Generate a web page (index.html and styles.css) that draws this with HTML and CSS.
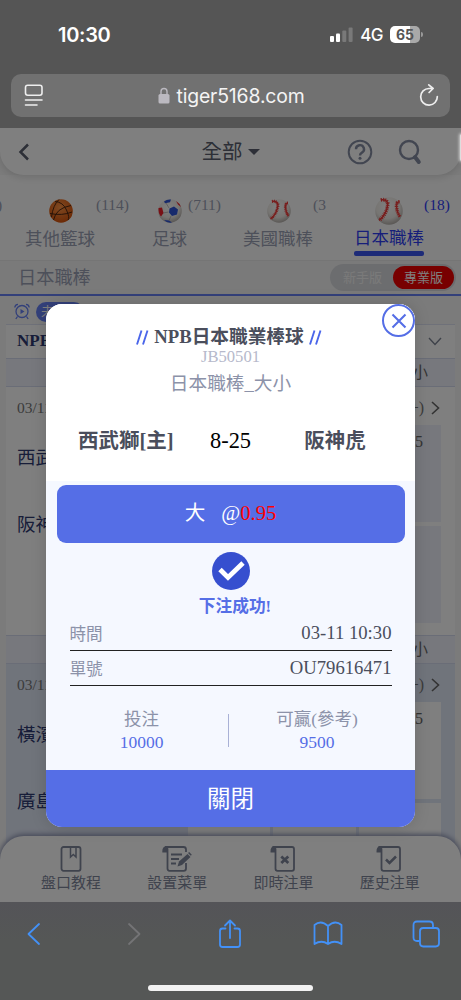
FILE: index.html
```html
<!doctype html>
<html lang="zh-Hant">
    <head>
        <meta charset="utf-8">
        <title>tiger5168.com</title>
        <link rel="stylesheet" href="styles.css">
    </head>
    <body>
        <!-- shared shapes -->
        <svg class="defs" width="0" height="0">
            <radialGradient id="shade" cx="45%" cy="35%" r="65%">
                <stop offset="0" stop-color="#fff"/>
                <stop offset=".65" stop-color="#eeebe6"/>
                <stop offset="1" stop-color="#b5b0ab"/>
            </radialGradient>
            <radialGradient id="orange" cx="45%" cy="35%" r="65%">
                <stop offset="0" stop-color="#ff9344"/>
                <stop offset="1" stop-color="#d8540c"/>
            </radialGradient>
            <symbol id="baseball" viewBox="0 0 24 24">
                <circle cx="12" cy="12" r="11.8" fill="url(#shade)"/>
                <path d="M5 2.500q5-1 6 3.500Q10 15 3.500 20" fill="none" stroke="#f03a38" stroke-width="1.400"/>
                <path d="M5 2.500q5-1 6 3.500Q10 15 3.500 20" fill="none" stroke="#f03a38" stroke-width="3.200" stroke-dasharray=".8 .9"/>
                <path d="M21 4q-3 0-2.500 5t3 8" fill="none" stroke="#f03a38" stroke-width="1.300"/>
                <path d="M21 4q-3 0-2.500 5t3 8" fill="none" stroke="#f03a38" stroke-width="3" stroke-dasharray=".8 .9"/>
            </symbol>
        </svg>

        <div class="status-bar">
            <span class="clock">10:30</span>
            <div class="signals">
                <svg width="24" height="16" viewBox="0 0 24 16">
                    <rect x="1" y="9" width="4" height="6" rx="1" fill="#fff"/>
                    <rect x="7" y="6.500" width="4" height="8.500" rx="1" fill="#fff"/>
                    <rect x="13.300" y="3.500" width="4" height="11.500" rx="1" fill="#797979"/>
                    <rect x="19.600" y="0.500" width="4" height="14.500" rx="1" fill="#797979"/>
                </svg>
                <span class="network">4G</span>
                <span class="battery">65</span>
                <span class="battery-tip"></span>
            </div>
        </div>

        <div class="address-row">
            <div class="address-bar">
                <svg width="20" height="23" viewBox="0 0 20 23" fill="none" stroke="#eee" stroke-width="1.600" stroke-linecap="round">
                    <rect x="1.500" y="1.300" width="16.500" height="10" rx="2.200"/>
                    <path d="M1.500 16h16.500M1.500 21h11.500"/>
                </svg>
                <div class="url">
                    <svg width="12" height="17" viewBox="0 0 12 17">
                        <path d="M3 8V4.500a3 3 0 0 1 6 0V8" fill="none" stroke="#bbb9c0" stroke-width="1.400"/>
                        <rect x=".5" y="7" width="11" height="9.500" rx="1.600" fill="#bbb9c0"/>
                    </svg>
                    <span>tiger5168.com</span>
                </div>
                <svg width="20" height="23" viewBox="0 0 20 23" fill="none" stroke="#eee" stroke-width="1.700" stroke-linecap="round" stroke-linejoin="round">
                    <path d="M18.300 12.500a8.300 8.300 0 1 1-8.300-8h4M9.800 .9l4.300 3.600-4 4"/>
                </svg>
            </div>
        </div>

        <div class="page">
            <div class="top-bar">
                <svg class="back" width="12" height="18" viewBox="0 0 12 18" fill="none" stroke="#5a5f6e" stroke-width="2.500">
                    <path d="M10 1.500L2.500 9l7.500 7.500"/>
                </svg>
                <div class="select">全部<span class="caret"></span></div>
                <div class="tools">
                    <svg width="26" height="26" viewBox="0 0 26 26" fill="none" stroke="#858da2" stroke-width="2">
                        <circle cx="13" cy="13" r="11.300"/>
                        <path d="M9 10.300a4 4 0 1 1 6 3.300c-1.400.9-2 1.500-2 2.900" stroke-width="2.400"/>
                        <circle cx="13" cy="19.300" r="1.500" fill="#858da2" stroke="none"/>
                    </svg>
                    <svg width="24" height="26" viewBox="0 0 24 26" fill="none" stroke="#858da2">
                        <circle cx="11" cy="11" r="9" stroke-width="2.400"/>
                        <path d="M17 18l3.800 5" stroke-width="4" stroke-linecap="round"/>
                    </svg>
                </div>
                <span class="edge-glow"></span>
            </div>

            <div class="tabs">
                <div class="tab cut">
                    <span class="count">)</span>
                </div>
                <div class="tab basketball">
                    <svg class="ball" width="24" height="24" viewBox="0 0 24 24">
                        <circle cx="12" cy="12" r="11.800" fill="url(#orange)"/>
                        <path d="M6 2.500Q14 3 17.500 11T19 21M1 14.500q12 2.500 22-1.500M10 .5Q4 6 2.500 18M22 6.500Q7 9 4.500 21" fill="none" stroke="#42200e" stroke-width=".9"/>
                    </svg>
                    <span class="count">(114)</span>
                    <span class="name">其他籃球</span>
                </div>
                <div class="tab football">
                    <svg class="ball" width="24" height="24" viewBox="0 0 24 24">
                        <circle cx="12" cy="12" r="11.800" fill="url(#shade)"/>
                        <path d="M11.500 9.500l4.500-2 4 3-1 5-5 1.500-3-3.500zM6 2.500Q9 0 13 .5l-1 2.700-5 1zM6 21l5 .5 3 2q-5 .8-8-2.500z" fill="#2f55d8"/>
                        <path d="M.5 9l3.500-.5L5.500 14 3 17.500Q0 14 .5 9zM18 2q4 2.500 5 6l-3-2.500z" fill="#f0202a"/>
                        <path d="M5 14l5.500-1M13 17l-2 4.500M11 9L8 4" fill="none" stroke="#999" stroke-width=".6"/>
                    </svg>
                    <span class="count">(711)</span>
                    <span class="name">足球</span>
                </div>
                <div class="tab mlb">
                    <svg class="ball" width="24" height="24"><use href="#baseball"/></svg>
                    <span class="count">(3</span>
                    <span class="name">美國職棒</span>
                </div>
                <div class="tab npb active">
                    <svg class="ball" width="28" height="28"><use href="#baseball"/></svg>
                    <span class="count">(18)</span>
                    <span class="name">日本職棒</span>
                </div>
            </div>

            <div class="section-bar">
                <span>日本職棒</span>
                <div class="mode">
                    <span class="mode-item">新手版</span>
                    <span class="mode-item on">專業版</span>
                </div>
            </div>

            <div class="filter-row">
                <svg width="16" height="17" viewBox="0 0 16 17" fill="none" stroke="#6680f5" stroke-width="1.300">
                    <circle cx="8" cy="8.500" r="6"/>
                    <path d="M.8 4.500Q1 1.500 4 1.300M15.200 4.500Q15 1.500 12 1.300M3.500 13.500L1.800 16M12.500 13.500l1.700 2.500"/>
                    <path d="M6.500 6v5l4-2.500z" fill="#6680f5" stroke="none"/>
                </svg>
                <span class="pill">未開賽</span>
            </div>

            <div class="league">
                <div class="league-head">
                    <span>NPB</span>
                    <svg width="14" height="9" viewBox="0 0 14 9" fill="none" stroke="#7d8494" stroke-width="1.400"><path d="M1 1l6 6.500L13 1"/></svg>
                </div>
                <div class="columns">大小</div>
                <div class="match">
                    <div class="match-info">
                        <span>03/11</span>
                        <span class="more">(+)<svg width="9" height="14" viewBox="0 0 9 14" fill="none" stroke="#666" stroke-width="1.600"><path d="M1 1l6.500 6L1 13"/></svg></span>
                    </div>
                    <div class="match-body">
                        <div class="teams"><span>西武獅</span><span>阪神虎</span></div>
                        <div class="odds">
                            <span class="odd"></span><span class="odd"></span><span class="odd">8.5</span>
                            <span class="odd"></span><span class="odd"></span><span class="odd"></span>
                        </div>
                    </div>
                </div>
                <div class="columns">大小</div>
                <div class="match tinted">
                    <div class="match-info">
                        <span>03/11</span>
                        <span class="more">(+)<svg width="9" height="14" viewBox="0 0 9 14" fill="none" stroke="#666" stroke-width="1.600"><path d="M1 1l6.500 6L1 13"/></svg></span>
                    </div>
                    <div class="match-body">
                        <div class="teams"><span>橫濱</span><span>廣島</span></div>
                        <div class="odds">
                            <span class="odd"></span><span class="odd"></span><span class="odd">8.5</span>
                            <span class="odd"></span><span class="odd"></span><span class="odd"></span>
                        </div>
                    </div>
                </div>
            </div>

            <div class="bottom-nav">
                <div class="nav-item">
                    <svg width="30" height="26" viewBox="0 0 30 26" fill="none" stroke="#7f869b" stroke-width="1.800">
                        <rect x="5.500" y="1" width="19" height="23.800" rx="2"/>
                        <path d="M14.500 1v10l2.800-2.500L20 11V1" stroke-width="1.500"/>
                    </svg>
                    <span>盤口教程</span>
                </div>
                <div class="nav-item">
                    <svg width="30" height="26" viewBox="0 0 30 26" fill="none" stroke="#7f869b" stroke-width="1.800">
                        <path d="M24 17v5.500q0 2.300-2.300 2.300H7.500q-2 0-2-2.300V3.500Q5.500 1 3 1h18.500Q24 1 24 3.500V6"/>
                        <path d="M5 1.200Q1 .8 1.200 5.500H5z" fill="#7f869b"/>
                        <path d="M9 8.500h11M9 13h8M9 17.500h5"/>
                        <path d="M15.500 20.500l1.500-5 8.500-7.500 3 3-8.500 8z" fill="#7f869b" stroke="none"/>
                        <path d="M26 7l1.200-1 2.600 2.700-1 1z" fill="#7f869b" stroke="none"/>
                    </svg>
                    <span>設置菜單</span>
                </div>
                <div class="nav-item">
                    <svg width="30" height="26" viewBox="0 0 30 26" fill="none" stroke="#7f869b" stroke-width="1.800">
                        <path d="M3.500 1h19.500q2 0 2 2v19.800q0 2-2 2H8.500q-2 0-2-2V3.500Q6.500 1 4 1"/>
                        <path d="M6 1.200Q2.200.8 2.400 5.500H6z" fill="#7f869b"/>
                        <path d="M12.300 10.500l7 6.500M19.300 10.500l-7 6.500" stroke-width="2.800"/>
                    </svg>
                    <span>即時注單</span>
                </div>
                <div class="nav-item">
                    <svg width="30" height="26" viewBox="0 0 30 26" fill="none" stroke="#7f869b" stroke-width="1.800">
                        <path d="M3.500 1h19.500q2 0 2 2v19.800q0 2-2 2H8.500q-2 0-2-2V3.500Q6.500 1 4 1"/>
                        <path d="M6 1.200Q2.200.8 2.400 5.500H6z" fill="#7f869b"/>
                        <path d="M11 13.500l3.500 3.500 6.500-6.500" stroke-width="2.500"/>
                    </svg>
                    <span>歷史注單</span>
                </div>
            </div>

            <!-- bet receipt -->
            <div class="overlay">
                <div class="modal">
                    <button class="close">
                        <svg width="16" height="16" viewBox="0 0 16 16" stroke="#556ee6" stroke-width="2.100"><path d="M1.500 1.500l13 13M14.500 1.500l-13 13"/></svg>
                    </button>
                    <div class="modal-head">
                        <h1>
                            <svg width="13" height="15" viewBox="0 0 13 15" stroke="#4b66ea" stroke-width="1.900"><path d="M1 14.500L5.500.5M7 14.500L11.500.5"/></svg>
                            NPB日本職業棒球
                            <svg width="13" height="15" viewBox="0 0 13 15" stroke="#4b66ea" stroke-width="1.900"><path d="M1 14.500L5.500.5M7 14.500L11.500.5"/></svg>
                        </h1>
                        <div class="code">JB50501</div>
                        <div class="kind">日本職棒_大小</div>
                        <div class="versus">
                            <span class="side">西武獅[主]</span>
                            <span class="line">8-25</span>
                            <span class="side">阪神虎</span>
                        </div>
                    </div>
                    <div class="pick"><span>大</span><span>@<b>0.95</b></span></div>
                    <svg class="check" width="38" height="38" viewBox="0 0 38 38">
                        <circle cx="19" cy="19" r="19" fill="#364fcf"/>
                        <path d="M8 17.500l8 8L31 11" fill="none" stroke="#fff" stroke-width="4.800"/>
                    </svg>
                    <div class="success">下注成功!</div>
                    <div class="detail"><span>時間</span><span class="value">03-11 10:30</span></div>
                    <div class="detail"><span>單號</span><span class="value">OU79616471</span></div>
                    <div class="amounts">
                        <div>投注<span class="money">10000</span></div>
                        <div class="divider"></div>
                        <div>可贏(參考)<span class="money">9500</span></div>
                    </div>
                    <button class="done">關閉</button>
                </div>
            </div>
        </div>

        <div class="browser-bar">
            <div class="browser-tools">
                <svg width="28" height="30" viewBox="0 0 28 30"><path d="M19 5L8.500 15 19 25"/></svg>
                <svg class="off" width="28" height="30" viewBox="0 0 28 30"><path d="M11 5l10.500 10L11 25"/></svg>
                <svg width="28" height="30" viewBox="0 0 28 30"><path d="M10.500 9.500H7.500Q5 9.500 5 12v13.500Q5 28 7.500 28h15q2.500 0 2.500-2.500V12q0-2.500-2.500-2.500h-3M15 19V2M10 6.500l5-5 5 5"/></svg>
                <svg width="30" height="30" viewBox="0 0 30 30"><path d="M15 7Q8 .5 1.500 6v19q7-4.500 13.500 0 6.500-4.500 13.500 0V6Q22 .5 15 7zV25"/></svg>
                <svg width="28" height="30" viewBox="0 0 28 30"><path d="M7.500 22H5q-3.500 0-3.500-3.500V6q0-3.500 3.500-3.500h12.500Q21 2.500 21 6v2.500"/><rect x="8" y="9" width="19" height="18.500" rx="3.200"/></svg>
            </div>
            <div class="home-indicator"></div>
        </div>
    </body>
</html>
```
FILE: styles.css
```css
*{
    box-sizing: border-box;
}
body{
    margin: 0;
    width: 461px;
    height: 1000px;
    overflow: hidden;
    display: flex;
    flex-direction: column;
    background: #555;
    font-family: "Liberation Serif", "Noto Sans CJK TC", serif;
}
svg{
    display: block;
    flex: none;
}
.defs{
    position: absolute;
}
button{
    border: none;
    padding: 0;
    font-family: inherit;
}

/* PHONE STATUS */
.status-bar{
    height: 74px;
    flex: none;
    display: flex;
    align-items: center;
    justify-content: space-between;
    padding: 0 38px 5px 58px;
    color: #fff;
    font-family: Inter, sans-serif;
}
.clock{
    font-size: 20px;
    font-weight: 600;
    letter-spacing: -0.3px;
}
.signals{
    display: flex;
    align-items: center;
}
.network{
    font-size: 17px;
    font-weight: 500;
    letter-spacing: -0.5px;
    margin: 0 7px 0 7px;
}
.battery{
    width: 30px;
    height: 17px;
    border-radius: 5px;
    background: linear-gradient(to right, #fff 65%, #a9a9a9 65%);
    color: #555;
    font-size: 14px;
    line-height: 17px;
    font-weight: 700;
    text-align: center;
}
.battery-tip{
    width: 2px;
    height: 5px;
    margin-left: 1px;
    border-radius: 0 2px 2px 0;
    background: #999;
}
.address-row{
    height: 54px;
    flex: none;
    padding: 0 11px;
}
.address-bar{
    height: 43px;
    border-radius: 10px;
    background: #717171;
    display: flex;
    align-items: center;
    justify-content: space-between;
    padding: 0 11px 0 13px;
}
.url{
    display: flex;
    align-items: center;
    gap: 6px;
    color: #f4f4f4;
    font-family: Inter, sans-serif;
    font-size: 19.4px;
    letter-spacing: -0.15px;
}

/* PAGE */
.page{
    height: 774px;
    flex: none;
    position: relative;
    overflow: hidden;
    background: #f7f7f7;
}
.top-bar{
    height: 47px;
    position: relative;
    display: grid;
    grid-template-columns: 1fr auto 1fr;
    align-items: center;
    padding: 0 39px 0 18px;
    background: #fff;
    border-radius: 0 0 24px 24px;
    box-shadow: 0 2px 8px rgba(0,0,0,0.14);
}
.select{
    display: flex;
    align-items: center;
    gap: 5px;
    font-size: 20.5px;
    line-height: 30px;
    color: #5a5f6e;
    margin-left: 21px;
    padding-top: 1px;
}
.caret{
    border: 6px solid transparent;
    border-top-color: #5a5f6e;
    border-bottom: none;
}
.tools{
    display: flex;
    justify-content: flex-end;
    gap: 25px;
}
.edge-glow{
    position: absolute;
    right: -3px;
    top: 6px;
    width: 4px;
    height: 27px;
    border-radius: 3px;
    background: #ddd;
    box-shadow: 0 0 3px 1px #ccc;
    z-index: 5;
}
.tabs{
    height: 86px;
    display: grid;
    grid-template-columns: 5px 116px 117px 92px 1fr;
    padding-top: 20px;
    background: #fdfdfd;
    border-bottom: 1px solid #eaeaea;
}
.tab{
    display: grid;
    grid-template-rows: 29px 30px;
    grid-template-columns: auto 1fr;
    align-items: center;
    align-content: start;
    color: #9ba1b4;
    padding-left: 20px;
}
.tab.cut{
    padding: 0;
}
.tab.cut .count{
    margin-left: -3px;
}
.ball{
    margin-left: 24px;
    margin-top: 3px;
}
.count{
    font-size: 15.5px;
    line-height: 18px;
    align-self: start;
    margin-left: 23px;
    padding-top: 1px;
}
.name{
    grid-column: 1 / 3;
    font-size: 17.5px;
    line-height: 26px;
    white-space: nowrap;
}
.tab.football{
    padding-left: 31px;
}
.football .ball{
    margin-left: 6px;
}
.football .count{
    margin-left: 6px;
}
.tab.mlb{
    padding-left: 5px;
}
.mlb .count{
    margin-left: 22px;
}
.tab.npb{
    padding-left: 24px;
}
.npb .ball{
    margin-left: 21px;
    margin-top: 2px;
}
.npb .count{
    margin-left: 21px;
}
.active{
    color: #2e3df5;
}
.active .name{
    width: 70px;
    height: 32px;
    margin-top: 4px;
}
.active .name::after{
    content: "";
    display: block;
    height: 5px;
    border-radius: 2px;
    background: #3b56f0;
}
.section-bar{
    height: 35px;
    display: flex;
    align-items: center;
    justify-content: space-between;
    padding: 0 5px 0 18px;
    border-bottom: 2px solid #6780f5;
    background: #f4f4f5;
    font-size: 18.2px;
    line-height: 24px;
    color: #9ba1b4;
}
.mode{
    display: flex;
    align-items: center;
    width: 126px;
    height: 27px;
    padding: 0 2px;
    border-radius: 14px;
    background: #d9dbde;
}
.mode-item{
    flex: 1;
    text-align: center;
    font-size: 13px;
    line-height: 23px;
    color: #f5f5f5;
    border-radius: 12px;
}
.mode-item.on{
    background: #f00000;
    color: #fff;
}
.filter-row{
    height: 28px;
    display: flex;
    align-items: center;
    gap: 6px;
    padding: 3px 14px 0;
}
.pill{
    width: 48px;
    height: 20px;
    border-radius: 10px;
    background: #6780f5;
    color: #fff;
    font-size: 13px;
    line-height: 20px;
    padding-left: 5px;
}
.league{
    margin: 0 6px;
    height: 520px;
    overflow: hidden;
    background: #fff;
    border-top: 1px solid #dfe3f2;
}
.league-head{
    height: 33px;
    display: flex;
    align-items: center;
    justify-content: space-between;
    padding: 0 13px 1px 11px;
    font-size: 17px;
    font-weight: bold;
    color: #2f3a72;
}
.columns{
    height: 29px;
    padding-right: 27px;
    background: #eef1fa;
    border-top: 1px solid #d4daef;
    border-bottom: 1px solid #d4daef;
    text-align: right;
    font-size: 15.5px;
    line-height: 27px;
    color: #666;
}
.match{
    height: 248px;
    padding: 0 14px 0 11px;
    background: #fff;
}
.match-info{
    height: 38px;
    display: flex;
    align-items: center;
    justify-content: space-between;
    padding: 3px 1px 0 0;
    font-size: 15.5px;
    color: #777;
}
.more{
    display: flex;
    align-items: center;
    gap: 7px;
    font-size: 16px;
}
.match-body{
    display: flex;
}
.teams{
    width: 171px;
    display: flex;
    flex-direction: column;
    gap: 41px;
    padding-top: 20px;
    font-size: 18.5px;
    line-height: 26px;
    color: #2f3a72;
}
.odds{
    flex: 1;
    display: grid;
    grid-template-columns: repeat(3, 1fr);
    grid-auto-rows: 97px;
    gap: 4px 3px;
}
.odd{
    padding: 5px 18px;
    background: #eef1fa;
    text-align: right;
    font-size: 16px;
    line-height: 24px;
    color: #666;
}
.tinted{
    background: #e1e8f7;
}
.tinted .odd{
    background: #fff;
}
.bottom-nav{
    position: absolute;
    left: 0;
    right: 0;
    bottom: 0;
    height: 66px;
    display: grid;
    grid-template-columns: repeat(4, 1fr);
    padding: 10px 18px 0;
    background: #fff;
    border-radius: 24px 24px 0 0;
    box-shadow: 0 -1px 5px 1px #8f96b4;
}
.nav-item{
    display: flex;
    flex-direction: column;
    align-items: center;
    font-size: 15px;
    line-height: 22px;
    color: #7f869b;
}
/* PAGE END */

/* MODAL */
.overlay{
    position: absolute;
    inset: 0;
    display: flex;
    justify-content: center;
    align-items: flex-start;
    padding-top: 176px;
    background: rgba(0,0,0,0.5);
}
.modal{
    position: relative;
    width: 369px;
    height: 523px;
    display: flex;
    flex-direction: column;
    align-items: center;
    border-radius: 16px;
    overflow: hidden;
    background: #f5f8ff;
    box-shadow: 0 0 16px rgba(0,0,0,0.15);
    color: #8c92a9;
}
.close{
    position: absolute;
    top: 0;
    right: 0;
    width: 33px;
    height: 33px;
    display: flex;
    align-items: center;
    justify-content: center;
    border: 2px solid #556ee6;
    border-radius: 50%;
    background: #fff;
}
.modal-head{
    width: 100%;
    height: 177px;
    padding-top: 20px;
    background: #fff;
    text-align: center;
}
h1{
    display: flex;
    align-items: center;
    justify-content: center;
    gap: 5px;
    margin: 0;
    padding-right: 3px;
    font-size: 18.7px;
    line-height: 26px;
    color: #4a4e5c;
}
.code{
    font-size: 16.6px;
    line-height: 16px;
    margin-top: -1px;
    color: #b6b9cb;
}
.kind{
    font-size: 18.7px;
    line-height: 28px;
    margin-top: 5px;
}
.versus{
    display: grid;
    grid-template-columns: 95px 95px 62px;
    justify-content: start;
    align-items: center;
    column-gap: 18px;
    padding-left: 32px;
    margin-top: 27px;
    line-height: 32px;
    white-space: nowrap;
}
.side{
    font-size: 20.5px;
    font-weight: bold;
    color: #4a4e5c;
}
.line{
    font-size: 22.4px;
    color: #000;
    text-align: left;
    padding-left: 19px;
}
.pick{
    width: 348px;
    height: 58px;
    margin-top: 4px;
    display: flex;
    justify-content: center;
    gap: 16px;
    border-radius: 9px;
    background: #556ee6;
    color: #fff;
    font-size: 20.6px;
    line-height: 56px;
}
.pick b{
    font-weight: normal;
    color: #f00;
}
.check{
    margin-top: 9px;
}
.success{
    margin: 4px 0 -4px 9px;
    font-size: 16.7px;
    font-weight: bold;
    line-height: 26px;
    color: #556ee6;
}
.detail{
    width: 322px;
    height: 35px;
    display: flex;
    align-items: center;
    justify-content: space-between;
    border-bottom: 1px solid #222;
    font-size: 16.6px;
}
.value{
    font-size: 18.7px;
    color: #4a4e5c;
}
.amounts{
    width: 322px;
    margin-top: 21px;
    display: grid;
    grid-template-columns: 144px 1px 149px;
    column-gap: 14px;
    align-items: center;
    font-size: 17.5px;
    line-height: 24px;
    text-align: center;
}
.divider{
    height: 33px;
    background: #a9b1d6;
}
.money{
    display: block;
    line-height: 22px;
    color: #556ee6;
}
.done{
    width: 100%;
    height: 57px;
    margin-top: auto;
    background: #556ee6;
    color: #fff;
    font-size: 23.5px;
    padding-bottom: 3px;
}

/* SAFARI BAR */
.browser-bar{
    flex: 1;
    display: flex;
    flex-direction: column;
    align-items: center;
    background: linear-gradient(#545458, #555756 40%);
}
.browser-tools{
    width: 100%;
    display: flex;
    justify-content: space-between;
    padding: 17px 21px 0 20px;
    fill: none;
    stroke: #4391f7;
    stroke-width: 1.8;
    stroke-linejoin: round;
    stroke-linecap: round;
}
.off{
    stroke: #747476;
}
.home-indicator{
    width: 165px;
    height: 6px;
    margin-top: 36px;
    border-radius: 3px;
    background: #f2f2f2;
}
```
